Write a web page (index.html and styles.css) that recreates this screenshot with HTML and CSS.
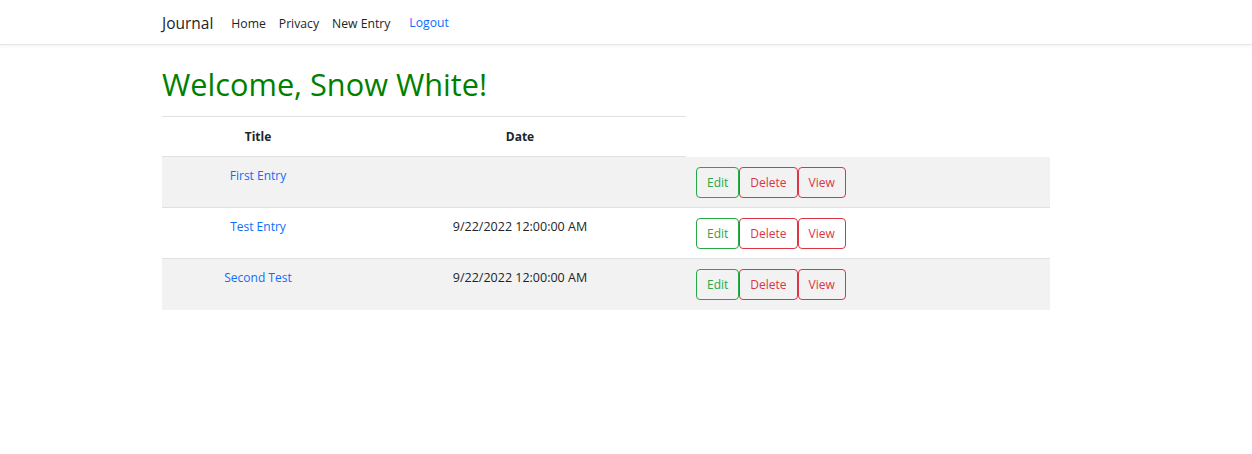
FILE: index.html
```html
<!DOCTYPE html>
<html lang="en">
<head>
<meta charset="utf-8">
<title>Journal</title>
<link rel="stylesheet" href="styles.css">
</head>
<body>
<header class="navbar">
  <div class="container nav-inner">
    <a class="brand" href="#">Journal</a>
    <nav class="nav-links">
      <a class="nav-link" href="#">Home</a>
      <a class="nav-link" href="#">Privacy</a>
      <a class="nav-link" href="#">New Entry</a>
      <a class="nav-link logout" href="#">Logout</a>
    </nav>
  </div>
</header>
<main class="container">
  <h1 class="welcome">Welcome, Snow White!</h1>
  <table class="entries">
    <colgroup>
      <col class="c-title">
      <col class="c-date">
      <col class="c-actions">
    </colgroup>
    <thead>
      <tr><th>Title</th><th>Date</th></tr>
    </thead>
    <tbody>
      <tr class="odd">
        <td><a href="#">First Entry</a></td>
        <td class="date"></td>
        <td class="actions"><button class="btn edit">Edit</button><button class="btn danger">Delete</button><button class="btn danger">View</button></td>
      </tr>
      <tr>
        <td><a href="#">Test Entry</a></td>
        <td class="date">9/22/2022 12:00:00 AM</td>
        <td class="actions"><button class="btn edit">Edit</button><button class="btn danger">Delete</button><button class="btn danger">View</button></td>
      </tr>
      <tr class="odd">
        <td><a href="#">Second Test</a></td>
        <td class="date">9/22/2022 12:00:00 AM</td>
        <td class="actions"><button class="btn edit">Edit</button><button class="btn danger">Delete</button><button class="btn danger">View</button></td>
      </tr>
    </tbody>
  </table>
</main>
</body>
</html>
```
FILE: styles.css
```css
html, body {
  margin: 0;
  padding: 0;
}
body {
  font-family: "Open Sans", "Liberation Sans", sans-serif;
  font-size: 12px;
  color: #212529;
  background: #fff;
}
a {
  text-decoration: none;
}
.container {
  width: 888px;
  margin-left: 162px;
}
.navbar {
  height: 45px;
  border-bottom: 1px solid #e5e5e5;
  box-shadow: 0 1px 4px rgba(0, 0, 0, 0.06);
  box-sizing: border-box;
  background: #fff;
}
.nav-inner {
  display: flex;
  align-items: center;
  height: 44px;
}
.brand {
  font-size: 15.5px;
  color: #212529;
  margin-right: 18px;
  line-height: 20px;
  margin-top: 2px;
}
.nav-links {
  display: flex;
  align-items: center;
  margin-top: 3px;
}
.nav-link {
  color: #212529;
  font-size: 12.2px;
  margin-right: 13px;
  line-height: 18px;
}
.nav-link.logout {
  color: #0d6efd;
  margin-left: 6px;
  margin-top: -2px;
}
.welcome {
  color: #008000;
  font-weight: 400;
  font-size: 30.7px;
  line-height: 40px;
  margin: 19px 0 12px 0;
}
.entries {
  border-collapse: collapse;
  width: 888px;
  table-layout: fixed;
}
.c-title { width: 192px; }
.c-date { width: 332px; }
.c-actions { width: 364px; }
.entries th {
  font-weight: 700;
  text-align: center;
  padding: 11px 8px 11px;
  line-height: 17px;
  border-top: 1px solid #dee2e6;
  border-bottom: 1px solid #dee2e6;
}
.entries td {
  text-align: center;
  vertical-align: top;
  padding: 10px 8px 9px;
  line-height: 17px;
  border-bottom: 1px solid #dee2e6;
}
.entries td.date {
  font-size: 12.5px;
}
.entries tr.odd td {
  background: #f2f2f2;
}
.entries tbody tr:last-child td {
  border-bottom: none;
  padding-bottom: 10px;
}
.entries td a {
  color: #0d6efd;
}
.entries td.actions {
  text-align: left;
  padding-left: 10px;
}
.btn {
  font-family: inherit;
  font-size: 12px;
  height: 31px;
  padding: 0 10px;
  background: transparent;
  border: 1px solid;
  border-radius: 4px;
  vertical-align: top;
  cursor: pointer;
}
.btn.edit {
  color: #28a745;
  border-color: #28a745;
}
.btn.danger {
  color: #dc3545;
  border-color: #dc3545;
}
```
